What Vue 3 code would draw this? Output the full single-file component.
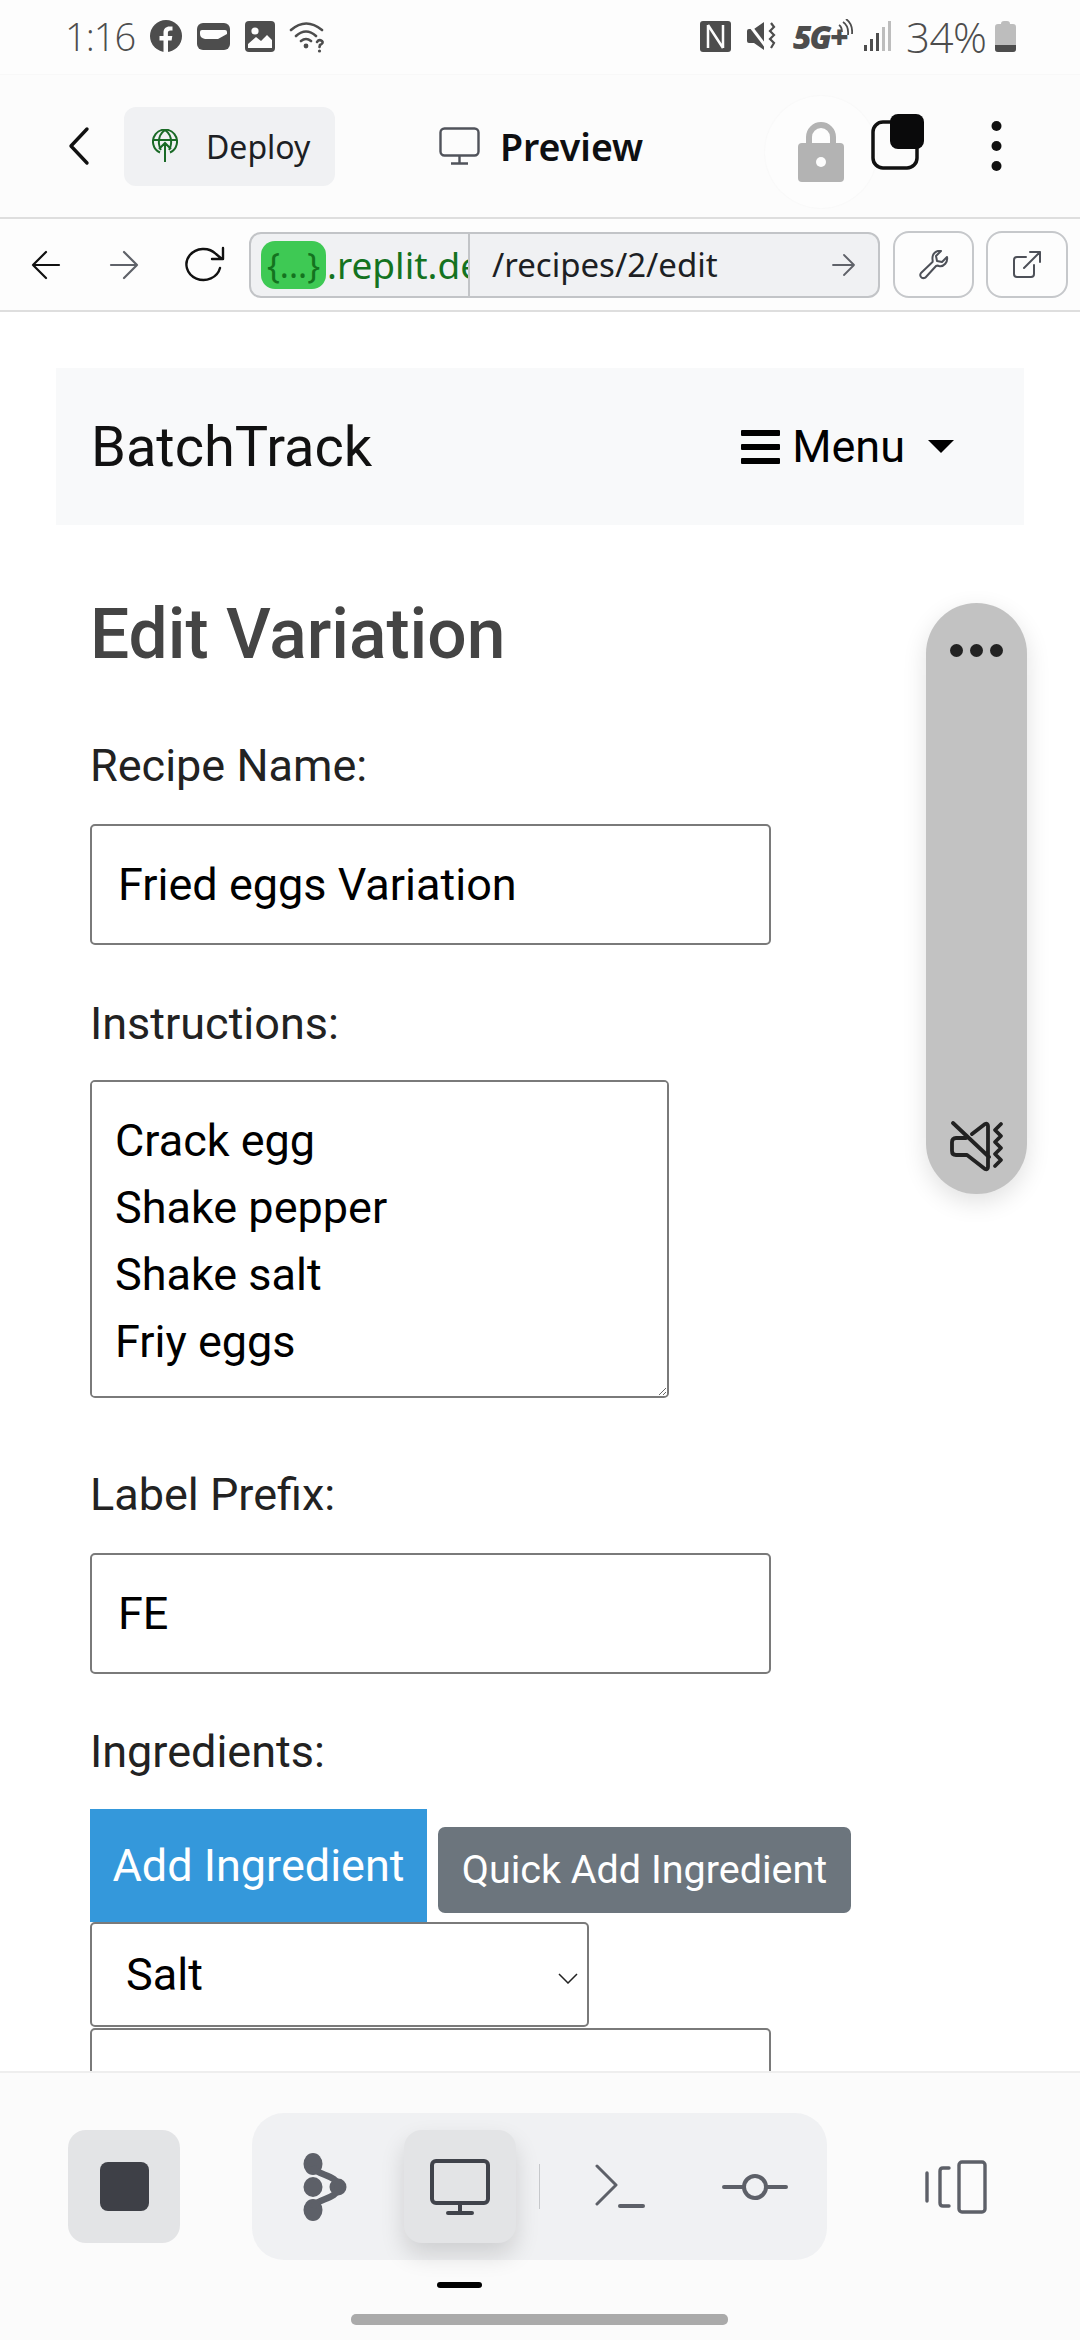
<script setup>
const lines = 'Crack egg\nShake pepper\nShake salt\nFriy eggs'
</script>

<template>
  <div class="phone">
    <div class="status">
      <div class="status-left">
        <span class="time">1:16</span>
        <svg class="st" width="32" height="32" viewBox="0 0 32 32"><circle cx="16" cy="16" r="16" fill="#4d4d4d"/><path d="M13.5 32V20.5H9.5V16h4v-3.4c0-4 2.4-6.2 6-6.2 1.7 0 3 .2 3 .2v3.9h-2c-2 0-2.6 1.2-2.6 2.5V16h4.4l-.7 4.5H18V32z" fill="#fdfdfd"/></svg>
        <svg class="st" width="33" height="27" viewBox="0 0 33 27"><rect width="33" height="27" rx="6" fill="#4d4d4d"/><path d="M3 9q0-2 2-2h23q2 0 2 2v2l-9 5H8q-5-1-5-5z" fill="#fdfdfd"/></svg>
        <svg class="st tight" width="30" height="31" viewBox="0 0 30 31"><rect width="30" height="31" rx="4" fill="#4d4d4d"/><circle cx="10" cy="10" r="3.6" fill="#fdfdfd"/><path d="M3 27v-4l8-7 5 4 6-6 5 5v8z" fill="#fdfdfd"/></svg>
        <svg width="37" height="33" viewBox="0 0 37 33" fill="none" stroke="#4d4d4d" stroke-width="2.6" stroke-linecap="round"><path d="M2 10Q17-3 33 10M7 16q10-9 20 0M12 21q5-4 10 0"/><circle cx="17" cy="26" r="2.4" fill="#4d4d4d" stroke="none"/><path d="M28 22q2-3 5-1 2 2-2 4l-.5 2"/><circle cx="30.500" cy="31" r="1.600" fill="#4d4d4d" stroke="none"/></svg>
      </div>
      <div class="status-right">
        <svg class="nfc" width="31" height="31" viewBox="0 0 31 31"><rect width="31" height="31" rx="3" fill="#4d4d4d"/><path d="M8 4v23M8 4l15 23M23 4v23" stroke="#fdfdfd" stroke-width="2.500" fill="none"/></svg>
        <svg class="mute" width="29" height="30" viewBox="0 0 29 30"><path d="M0 10q0-2 2-2h5l10-7v28L7 22H2q-2 0-2-2z" fill="#4d4d4d"/><path d="M1 2l19 25" stroke="#fdfdfd" stroke-width="3"/><path d="M24 2l3 4-4 4 4 4-4 4 4 4-3 5" stroke="#4d4d4d" stroke-width="2.200" fill="none"/></svg>
        <span class="fiveg">5G+</span>
        <svg class="waves" width="16" height="22" viewBox="0 0 16 22" fill="none" stroke="#4d4d4d" stroke-width="1.800"><path d="M2 6q3 2 3 7M6 3q6 4 5 13M9 0q7 5 6 15"/></svg>
        <svg class="signal" width="27" height="30" viewBox="0 0 27 30"><rect x="0" y="24" width="3" height="6" fill="#4d4d4d"/><rect x="6" y="18" width="3" height="12" fill="#4d4d4d"/><rect x="12" y="12" width="3" height="18" fill="#4d4d4d"/><rect x="18" y="6" width="3" height="24" fill="#bdbdbd"/><rect x="24" y="0" width="3" height="30" fill="#bdbdbd"/></svg>
        <span class="batt">34%</span>
        <svg width="21" height="31" viewBox="0 0 21 31"><path d="M6 3q0-3 3-3h3q3 0 3 3h3q3 0 3 3v22q0 3-3 3H3q-3 0-3-3V6q0-3 3-3z" fill="#bdbdbd"/><path d="M0 24h21v4q0 3-3 3H3q-3 0-3-3z" fill="#4d4d4d"/></svg>
      </div>
    </div>

    <div class="topbar">
      <svg class="back" width="22" height="40" viewBox="0 0 22 40"><path d="M19 3L3 20l16 17" fill="none" stroke="#111" stroke-width="3.400" stroke-linecap="round" stroke-linejoin="round"/></svg>
      <div class="deploy">
        <svg width="26" height="34" viewBox="0 0 26 34" fill="none" stroke="#1a6a26" stroke-width="2"><path d="M8 23.500a12 12 0 1 1 10 0M1 11h24M13 1q-7 5-6 14q.5 4 2 6M13 1q7 5 6 14q-.5 4-2 6M13 33V14M7 20l6-6 6 6"/></svg>
        <span>Deploy</span>
      </div>
      <div class="preview">
        <svg width="41" height="38" viewBox="0 0 41 38" fill="none" stroke="#50535b" stroke-width="2.400"><rect x="1.500" y="1.500" width="38" height="27" rx="4"/><path d="M20.500 29v7M12 36.500h17"/></svg>
        <span>Preview</span>
      </div>
      <div class="lock">
        <svg width="46" height="60" viewBox="0 0 46 60"><path d="M11 24v-9a12 12 0 0 1 24 0v9" fill="none" stroke="#b3b3b3" stroke-width="6"/><rect y="21" width="46" height="39" rx="4" fill="#b3b3b3"/><circle cx="23" cy="40" r="5" fill="#fdfdfd"/></svg>
      </div>
      <svg class="windows" width="54" height="56" viewBox="0 0 54 56"><rect x="2" y="8" width="44" height="46" rx="10" fill="none" stroke="#111" stroke-width="3.500"/><rect x="19" y="0" width="34" height="35" rx="8" fill="#0a0a0b"/></svg>
      <svg class="kebab" width="11" height="50" viewBox="0 0 11 50"><circle cx="5.500" cy="5" r="5" fill="#111"/><circle cx="5.500" cy="25" r="5" fill="#111"/><circle cx="5.500" cy="45" r="5" fill="#111"/></svg>
    </div>

    <div class="urlbar">
      <svg class="nav-a" width="30" height="30" viewBox="0 0 30 30" fill="none" stroke="#111" stroke-width="2.200" stroke-linecap="round" stroke-linejoin="round"><path d="M28 15H2M15 2L2 15l13 13"/></svg>
      <svg class="nav-b" width="30" height="30" viewBox="0 0 30 30" fill="none" stroke="#5f6269" stroke-width="2.200" stroke-linecap="round" stroke-linejoin="round"><path d="M2 15h26M15 2l13 13-13 13"/></svg>
      <svg class="nav-c" width="41" height="38" viewBox="0 0 41 38" fill="none" stroke="#111" stroke-width="2.400" stroke-linecap="round" stroke-linejoin="round"><path d="M36 22a17 15.500 0 1 1-4-14l6 5M39 2v11H28"/></svg>
      <div class="address">
        <div class="host">
          <span class="repl">{...}</span><span class="domain">.replit.dev</span>
        </div>
        <div class="path">
          <span>/recipes/2/edit</span>
          <svg width="23" height="22" viewBox="0 0 23 22" fill="none" stroke="#5f6269" stroke-width="1.800" stroke-linecap="round" stroke-linejoin="round"><path d="M1 11h21M12 1l10 10-10 10"/></svg>
        </div>
      </div>
      <div class="tool wrench">
        <svg width="30" height="30" viewBox="0 0 30 30" fill="none" stroke="#4d5058" stroke-width="2" stroke-linejoin="round"><path d="M28 7l-5 5-5-1-1-5 5-5c-5-1-9 3-8.500 8 0 1.500.5 2 0 3L2 23q-1.500 2 0 4t4.500.5L17 16c1-.5 2-.5 3 0 5 1 9-4 8-9z"/></svg>
      </div>
      <div class="tool">
        <svg width="28" height="27" viewBox="0 0 28 27" fill="none" stroke="#4d5058" stroke-width="2" stroke-linecap="round" stroke-linejoin="round"><path d="M13 6H4Q1 6 1 9v14q0 3 3 3h14q3 0 3-3v-9M11 17L27 1M17 1h10v10"/></svg>
      </div>
    </div>

    <div class="page">
      <nav class="navbar">
        <span class="brand">BatchTrack</span>
        <span class="menu">
          <span class="burger"><i></i><i></i><i></i></span>
          <span>Menu</span>
          <span class="caret"></span>
        </span>
      </nav>
      <form class="form">
        <h2>Edit Variation</h2>
        <label class="first">Recipe Name:</label>
        <input class="field" type="text" value="Fried eggs Variation">
        <label class="l2">Instructions:</label>
        <textarea class="area" :value="lines"></textarea>
        <label class="l3">Label Prefix:</label>
        <input class="field" type="text" value="FE">
        <label class="l4">Ingredients:</label>
        <div class="btns">
          <button type="button" class="add">Add Ingredient</button>
          <button type="button" class="quick">Quick Add Ingredient</button>
        </div>
        <div class="select-wrap">
          <select class="pick"><option>Salt</option></select>
          <svg class="chev" width="20" height="11" viewBox="0 0 20 11"><path d="M1 1l9 9 9-9" fill="none" stroke="#222" stroke-width="1.500"/></svg>
        </div>
        <input class="field qty" type="text">
      </form>
      <div class="float">
        <span class="dots"><i></i><i></i><i></i></span>
        <svg width="54" height="52" viewBox="0 0 54 52" fill="none" stroke="#222" stroke-width="3.800" stroke-linecap="round" stroke-linejoin="round"><path d="M3 2l36 34M16 17H6q-4 0-4 4v9q0 4 4 4h11l18 14q3 1 3-2V5q0-3-3-2L22 13"/><path d="M51 3l-6 6 6 6-6 6 6 6-6 6 6 6-6 6"/></svg>
      </div>
    </div>

    <div class="dock">
      <div class="dock-row">
        <div class="stop"><i></i></div>
        <div class="tabs">
          <svg class="t-nodes" width="44" height="68" viewBox="0 0 44 68"><g fill="#5d6068"><ellipse cx="10" cy="11" rx="9.500" ry="11"/><ellipse cx="10" cy="34" rx="9.500" ry="10"/><ellipse cx="10" cy="57" rx="9.500" ry="11"/><circle cx="35" cy="34" r="8.500"/></g><path d="M10 13c2 10 25 8 25 21S12 45 10 55" fill="none" stroke="#5d6068" stroke-width="6.500"/></svg>
          <div class="tab-on">
            <svg width="60" height="56" viewBox="0 0 60 56" fill="none" stroke="#40434b" stroke-width="4"><rect x="2" y="2" width="56" height="42" rx="4"/><path d="M30 45v9M18 54h24" stroke-linecap="round"/></svg>
          </div>
          <i class="sep"></i>
          <svg class="t-term" width="50" height="46" viewBox="0 0 50 46" fill="none" stroke="#5d6068" stroke-width="3" stroke-linecap="round" stroke-linejoin="round"><path d="M2 2l19 19L2 40"/><path d="M25 42h23" stroke-width="4"/></svg>
          <svg class="t-git" width="66" height="28" viewBox="0 0 66 28" fill="none" stroke="#5d6068" stroke-width="4" stroke-linecap="round"><circle cx="33" cy="14" r="11"/><path d="M2 14h20M44 14h20"/></svg>
        </div>
        <svg class="layout" width="62" height="54" viewBox="0 0 62 54" fill="none" stroke="#5d6068" stroke-width="3.400" stroke-linecap="round" stroke-linejoin="round"><rect x="34" y="2" width="26" height="50" rx="3"/><path d="M24 8h-6q-3 0-3 3v32q0 3 3 3h6M2 13v28"/></svg>
      </div>
      <i class="active-bar"></i>
      <i class="home-bar"></i>
    </div>
  </div>
</template>

<style>
html, body {
  margin: 0;
  background: #fff;
}
</style>

<style scoped>
* {
  box-sizing: border-box;
}

.phone {
  width: 1080px;
  height: 2340px;
  display: flex;
  flex-direction: column;
  overflow: hidden;
  font-family: Roboto, sans-serif;
  background: #fff;
}

.status {
  height: 75px;
  flex: none;
  display: flex;
  justify-content: space-between;
  align-items: center;
  padding: 0 64px 2px 65px;
  background: #fdfdfd;
  border-bottom: 1px solid #f8f8f8;
  color: #4d4d4d;
}

.status-left,
.status-right {
  display: flex;
  align-items: center;
}

.time {
  width: 85px;
  font: 300 38px "Open Sans", sans-serif;
  letter-spacing: -1px;
}

.st {
  margin-right: 15px;
}

.st.tight {
  margin-right: 14px;
}

.nfc {
  margin-right: 16px;
}

.mute {
  margin-right: 17px;
}

.fiveg {
  width: 47px;
  font: italic 800 32px "Open Sans", sans-serif;
  letter-spacing: -2px;
}

.waves {
  margin: -12px 0 0 -3px;
}

.signal {
  margin: 0 15px 0 11px;
}

.batt {
  width: 89px;
  font: 300 42px "Open Sans", sans-serif;
  letter-spacing: -.5px;
}

.topbar {
  height: 144px;
  flex: none;
  display: flex;
  align-items: center;
  background: #fcfcfc;
  border-bottom: 2px solid #dedede;
}

.back {
  margin-left: 68px;
}

.deploy {
  width: 211px;
  height: 79px;
  margin-left: 34px;
  display: flex;
  align-items: center;
  gap: 28px;
  padding-left: 28px;
  background: #f0f1f3;
  border-radius: 12px;
  font: 400 32px "Noto Sans", sans-serif;
  color: #1d1f24;
}

.preview {
  display: flex;
  align-items: center;
  gap: 20px;
  margin-left: 104px;
  font: 600 37.5px "Noto Sans", sans-serif;
  color: #0e0f11;
}

.lock {
  width: 112px;
  height: 112px;
  margin: 12px 0 0 122px;
  display: flex;
  align-items: center;
  justify-content: center;
  border-radius: 50%;
  background: #fdfdfd;
  box-shadow: 0 0 2px #f3f3f3;
}

.windows {
  margin: -8px 0 0 -6px;
}

.kebab {
  margin-left: 66px;
}

.urlbar {
  height: 93px;
  flex: none;
  display: flex;
  align-items: center;
  background: #fdfdfd;
  border-bottom: 2px solid #dedede;
}

.nav-a {
  margin-left: 31px;
}

.nav-b {
  margin-left: 48px;
}

.nav-c {
  margin-left: 45px;
}

.address {
  width: 631px;
  height: 66px;
  margin-left: 24px;
  display: flex;
  background: #f0f1f3;
  border: 2px solid #c2c4c7;
  border-radius: 12px;
  overflow: hidden;
}

.host {
  width: 217px;
  flex: none;
  display: flex;
  align-items: center;
  padding-left: 10px;
  overflow: hidden;
  white-space: nowrap;
  font: 400 37px "Noto Sans", sans-serif;
  color: #14731f;
}

.repl {
  width: 65px;
  height: 48px;
  flex: none;
  display: flex;
  align-items: center;
  justify-content: center;
  background: #3ec954;
  border-radius: 14px;
  font-size: 34px;
  margin-right: 1px;
}

.path {
  flex: 1;
  display: flex;
  align-items: center;
  justify-content: space-between;
  padding: 0 23px 0 22px;
  border-left: 2px solid #c2c4c7;
  font: 400 33px "Noto Sans", sans-serif;
  color: #1d1f24;
}

.tool {
  width: 82px;
  height: 67px;
  margin-left: 12px;
  display: flex;
  align-items: center;
  justify-content: center;
  background: #fdfdfd;
  border: 2px solid #c6c8cb;
  border-radius: 16px;
}

.tool.wrench {
  width: 81px;
  margin-left: 13px;
}

.page {
  position: relative;
  flex: 1;
  min-height: 0;
  padding: 56px 56px 0;
  overflow: hidden;
}

.navbar {
  height: 157px;
  display: flex;
  align-items: center;
  justify-content: space-between;
  padding: 0 70px 0 35px;
  background: #f8f9fa;
  color: #111;
}

.brand {
  font-size: 56px;
}

.menu {
  display: flex;
  align-items: center;
  font-size: 45px;
  color: #000;
}

.burger {
  width: 39px;
  display: flex;
  flex-direction: column;
  gap: 8px;
  margin-right: 12px;
}

.burger i {
  height: 6px;
  background: #000;
  border-radius: 1px;
}

.caret {
  width: 0;
  height: 0;
  margin-left: 23px;
  border: 13px solid transparent;
  border-top: 13px solid #000;
  border-bottom: 0;
}

.form {
  display: flex;
  flex-direction: column;
  align-items: flex-start;
  padding-left: 34px;
  color: #222;
}

h2 {
  margin: 70px 0 0;
  height: 80px;
  font-size: 69.5px;
  line-height: 80px;
  font-weight: 500;
  color: #444;
}

label {
  height: 50px;
  line-height: 50px;
  font-size: 45px;
}

.first {
  margin-top: 66px;
}

.l2 {
  margin-top: 54px;
}

.l3 {
  margin-top: 72px;
}

.l4 {
  margin-top: 53px;
}

.field {
  display: block;
  width: 681px;
  height: 121px;
  flex: none;
  margin-top: 33px;
  padding: 0 26px;
  border: 2px solid #7a7a7a;
  border-radius: 5px;
  background: #fff;
  font: 400 45px Roboto, sans-serif;
  color: #000;
}

.area {
  display: block;
  width: 579px;
  height: 318px;
  flex: none;
  margin-top: 31px;
  padding: 25px 23px;
  border: 2px solid #7a7a7a;
  border-radius: 5px;
  font: 400 45px/67px Roboto, sans-serif;
  color: #000;
}

.btns {
  display: flex;
  align-items: center;
  gap: 11px;
  margin-top: 32px;
}

.add {
  width: 337px;
  height: 113px;
  border: 0;
  background: #3498db;
  color: #fff;
  font: 400 45px Roboto, sans-serif;
}

.quick {
  width: 413px;
  height: 86px;
  margin-top: 8px;
  border: 0;
  border-radius: 7px;
  background: #6c757d;
  color: #fff;
  font: 400 39.500px Roboto, sans-serif;
}

.select-wrap {
  position: relative;
  width: 499px;
  height: 105px;
  flex: none;
}

.pick {
  width: 100%;
  height: 100%;
  padding: 0 34px;
  appearance: none;
  border: 2px solid #7a7a7a;
  border-radius: 5px;
  background: #fff;
  font: 400 45px Roboto, sans-serif;
  color: #000;
}

.chev {
  position: absolute;
  top: 51px;
  right: 11px;
}

.qty {
  margin-top: 1px;
}

.float {
  position: absolute;
  top: 291px;
  left: 926px;
  width: 101px;
  height: 591px;
  display: flex;
  flex-direction: column;
  align-items: center;
  justify-content: space-between;
  padding: 41px 0 21px;
  background: #c2c2c2;
  border-radius: 51px;
  box-shadow: 0 8px 24px rgba(0, 0, 0, .12);
}

.dots {
  display: flex;
  gap: 7px;
}

.dots i {
  width: 13px;
  height: 13px;
  border-radius: 50%;
  background: #222;
}

.dock {
  position: relative;
  height: 269px;
  flex: none;
  display: flex;
  flex-direction: column;
  background: #fbfbfb;
  border-top: 2px solid #eee;
}

.dock-row {
  display: flex;
  align-items: center;
  height: 147px;
  margin-top: 40px;
  padding-left: 68px;
}

.stop {
  width: 112px;
  height: 113px;
  display: flex;
  align-items: center;
  justify-content: center;
  background: #e3e4e6;
  border-radius: 18px;
}

.stop i {
  width: 49px;
  height: 49px;
  background: #3e4047;
  border-radius: 8px;
}

.tabs {
  width: 575px;
  height: 147px;
  margin-left: 72px;
  display: flex;
  align-items: center;
  background: #f0f1f3;
  border-radius: 32px;
}

.t-nodes {
  margin-left: 51px;
}

.tab-on {
  width: 112px;
  height: 113px;
  margin-left: 57px;
  display: flex;
  align-items: center;
  justify-content: center;
  background: #e3e4e6;
  border-radius: 18px;
  box-shadow: 0 12px 24px rgba(0, 0, 0, .14);
}

.sep {
  width: 1px;
  height: 45px;
  margin-left: 23px;
  background: #c6c8cb;
}

.t-term {
  margin-left: 55px;
}

.t-git {
  margin-left: 77px;
}

.layout {
  margin-left: 98px;
}

.active-bar {
  width: 45px;
  height: 6px;
  margin: 22px 0 0 437px;
  background: #000;
  border-radius: 3px;
}

.home-bar {
  width: 377px;
  height: 11px;
  margin: 26px 0 0 351px;
  background: #aaa;
  border-radius: 5px;
}
</style>
